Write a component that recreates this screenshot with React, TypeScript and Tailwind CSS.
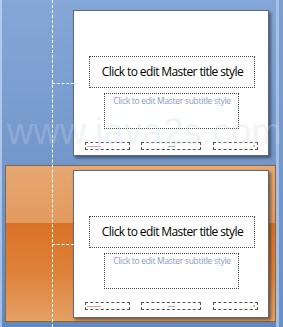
import React from 'react'

const font = { fontFamily: '"Open Sans", "Liberation Sans", sans-serif' }

function Slide({ tall = false }: { tall?: boolean }) {
  return (
    <div
      className={`relative w-[196px] ${tall ? 'h-[148px]' : 'h-[146px]'} bg-white border border-[#5a6a80] shadow-[2px_2px_3px_rgba(0,0,0,0.45)] flex flex-col`}
    >
      {/* Title placeholder */}
      <div className="ml-[15px] mt-[45px] w-[166px] h-[32px] border border-dotted border-[#444] flex items-center justify-center">
        <span className="text-[12px] tracking-[-0.6px] text-black leading-none" style={font}>
          Click to edit Master title style
        </span>
      </div>
      {/* Subtitle placeholder */}
      <div className="ml-[30px] mt-[5px] w-[135px] h-[36px] border border-dotted border-[#444] flex justify-center pt-[1px]">
        <span className="text-[8.5px] tracking-[-0.3px] text-[#8a9cc0] leading-[11px]" style={font}>
          Click to edit Master subtitle style
        </span>
      </div>
      {/* Footer placeholders */}
      <div className="flex mt-[13px] ml-[11px]">
        <div className="w-[45px] h-[8px] border border-dashed border-[#555] flex items-center pl-[1px]">
          <span className="w-[14px] h-[1px] bg-[#e0a090]" />
        </div>
        <div className="ml-[11px] w-[60px] h-[8px] border border-dashed border-[#555] flex items-center justify-center">
          <span className="w-[7px] h-[1px] bg-[#a0b0d0]" />
        </div>
        <div className="ml-[12px] w-[45px] h-[8px] border border-dashed border-[#555] flex items-center justify-end pr-[2px]">
          <span className="w-[2px] h-[2px] bg-[#e0b090]" />
        </div>
      </div>
    </div>
  )
}

export default function App() {
  return (
    <div className="relative w-[283px] h-[327px] overflow-hidden bg-gradient-to-b from-[#85a7d7] via-[#7497cb] to-[#6288c1] flex">
      {/* left edge strip */}
      <div className="w-[3px] h-full bg-gradient-to-b from-[#b4cbec] to-[#a3bde4]" />

      <div className="flex-1 flex flex-col">
        <div className="pt-[10px] pl-[71px]">
          <Slide />
        </div>

        {/* selected slide */}
        <div className="mt-[9px] ml-[3px] w-[271px] h-[157px] border border-[#7f6a50] bg-gradient-to-b from-[#e6a771] via-[#e19658] to-[#e4a266] relative">
          <div className="absolute inset-x-0 top-[57px] bottom-0 bg-gradient-to-b from-[#da7226] via-[#dd8138] to-[#e5a064]" />
          <div className="absolute inset-x-0 bottom-0 h-[1px] bg-[#f5a43a]" />
          <div className="relative pt-[4px] pl-[67px]">
            <Slide tall />
          </div>
        </div>
      </div>

      {/* right edge strips */}
      <div className="w-[3px] h-full bg-[#a6bfe2]" />
      <div className="w-[5px] h-full bg-gradient-to-b from-[#7c9fd2] to-[#6a90c6]" />

      {/* watermark */}
      <div
        className="absolute left-[7px] top-[114px] text-[36px] leading-none tracking-[0.5px] text-[rgba(205,215,232,0.3)] pointer-events-none whitespace-nowrap"
        style={{ fontFamily: '"Liberation Sans", sans-serif' }}
      >
        www.java2s.com
      </div>

      {/* tree connector lines */}
      <div className="absolute left-[52px] top-0 h-full border-l border-dashed border-white" />
      <div className="absolute left-[52px] top-[83px] w-[22px] border-t border-dashed border-white" />
      <div className="absolute left-[52px] top-[244px] w-[22px] border-t border-dashed border-white" />
    </div>
  )
}
